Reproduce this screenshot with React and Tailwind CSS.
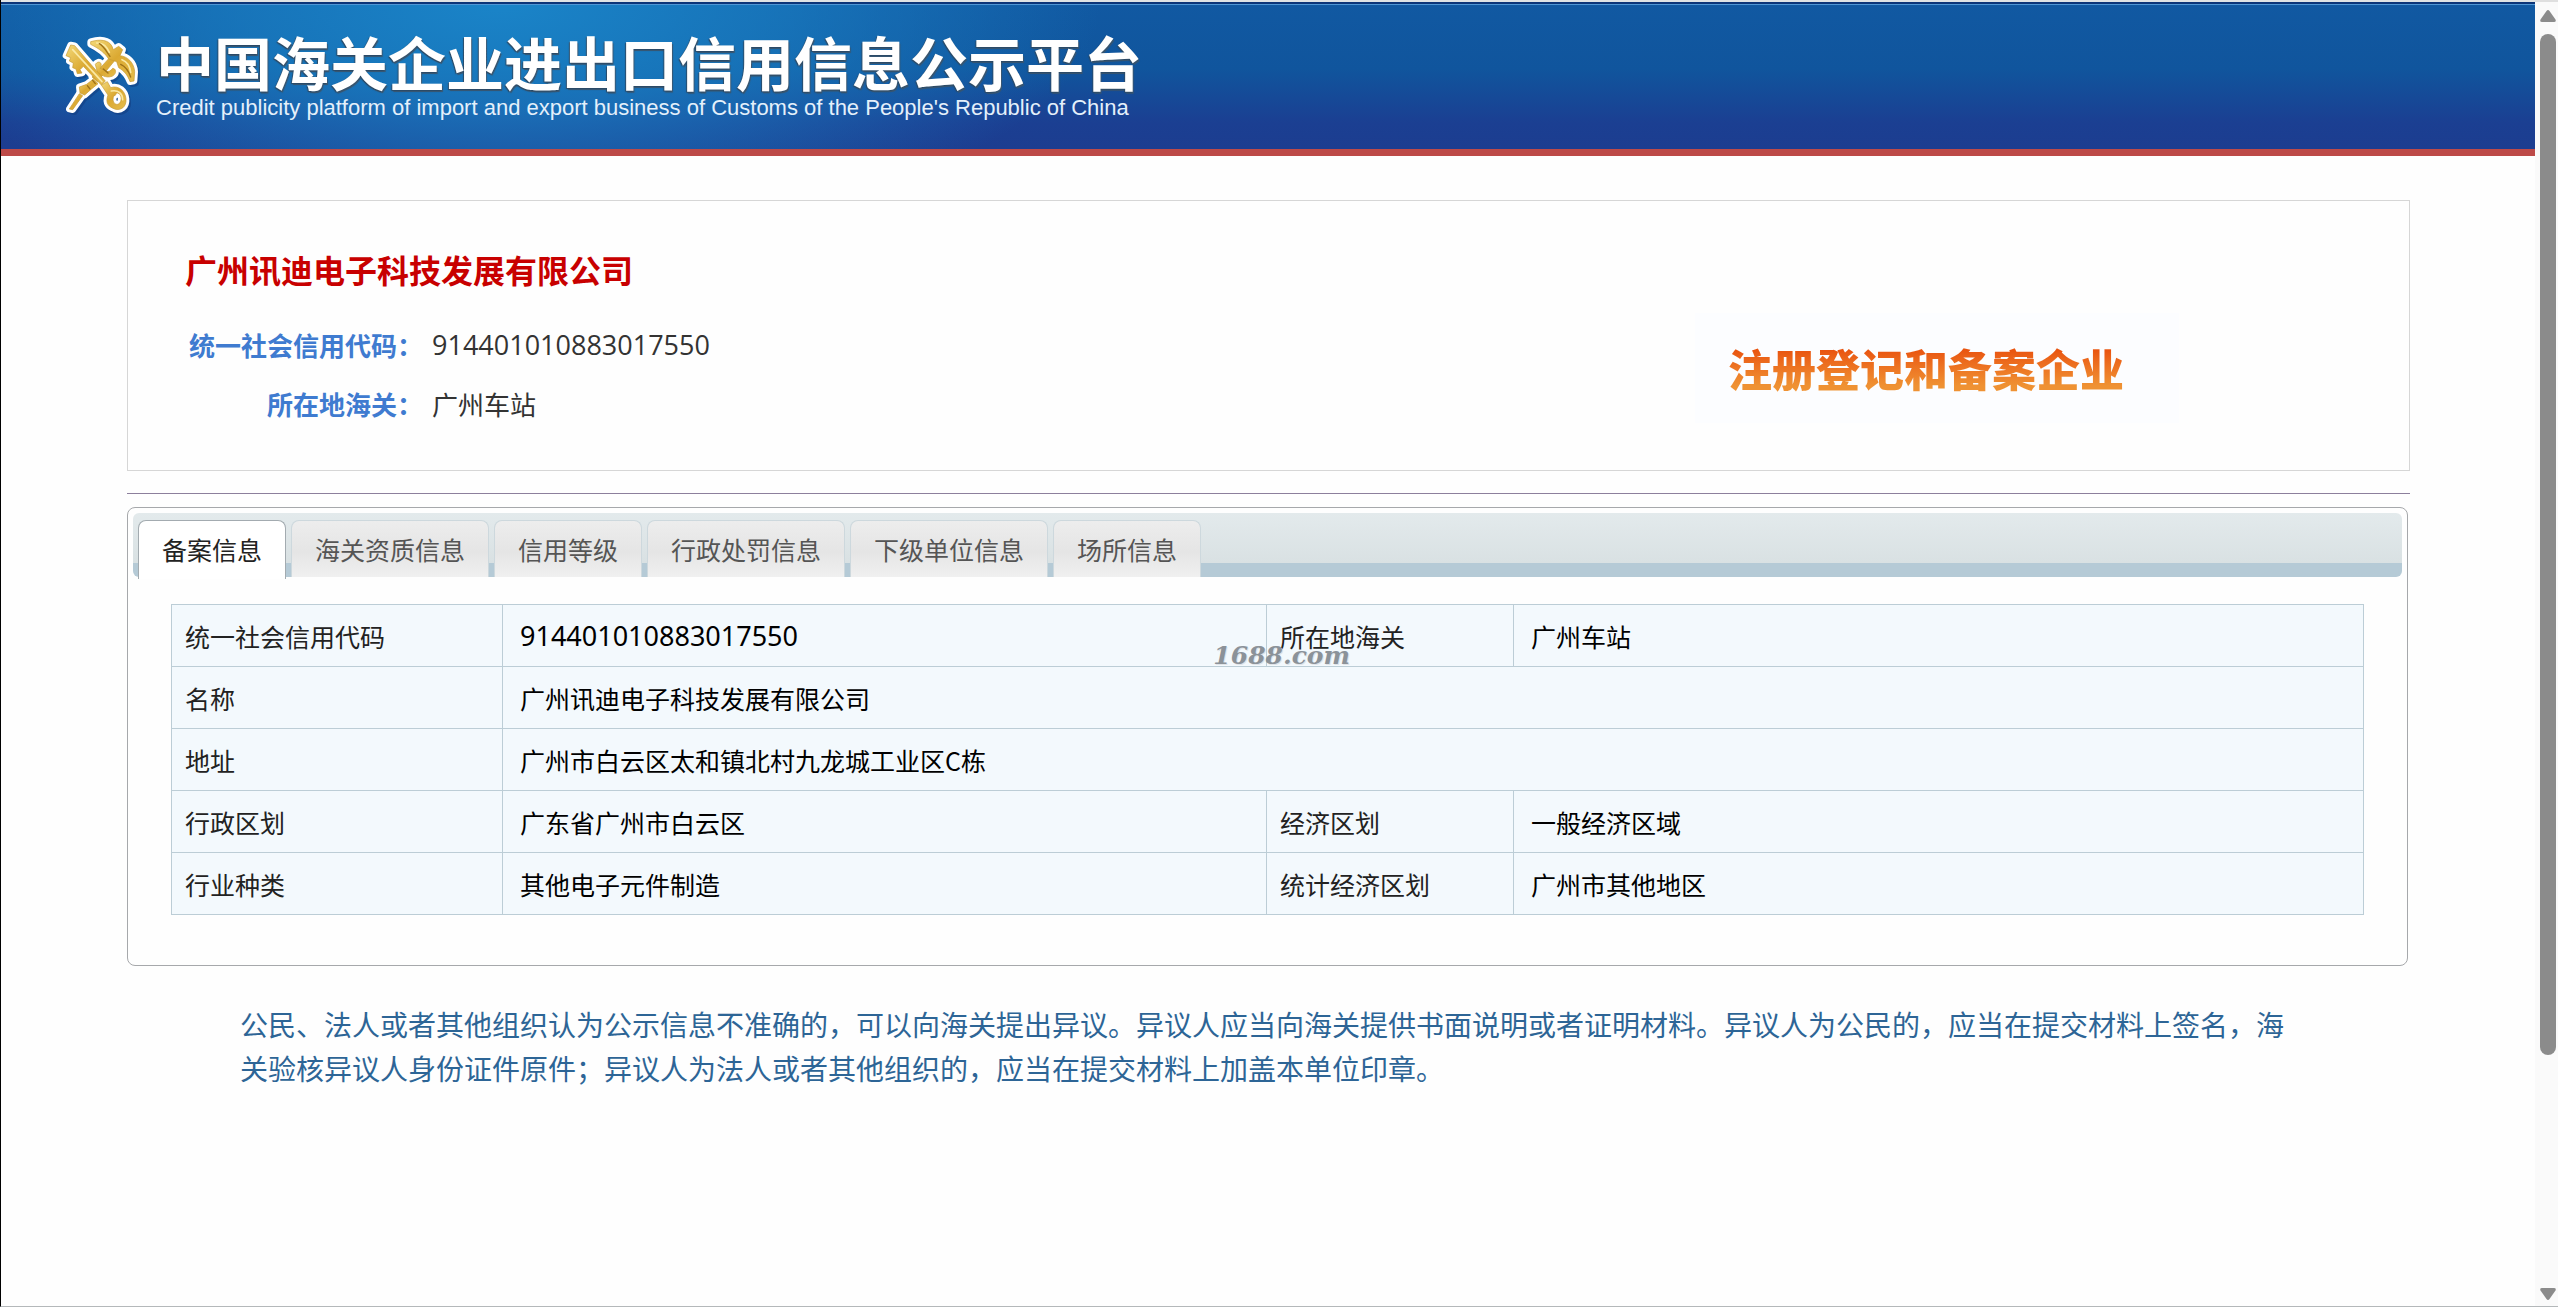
import { useState } from 'react';

const tabs = ['备案信息', '海关资质信息', '信用等级', '行政处罚信息', '下级单位信息', '场所信息'];

const notice =
  '公民、法人或者其他组织认为公示信息不准确的，可以向海关提出异议。异议人应当向海关提供书面说明或者证明材料。异议人为公民的，应当在提交材料上签名，海关验核异议人身份证件原件；异议人为法人或者其他组织的，应当在提交材料上加盖本单位印章。';

function EmblemShapes() {
  return (
    <>
      {/* staff */}
      <path d="M88 262 L118 216 L128 222 L98 264 Z" />
      <path d="M118 196 L140 188 L160 172 L174 186 L152 204 L134 220 L120 214 Z" />
      <path d="M156 166 L216 100 L228 112 L172 180 Z" />
      <path d="M166 128 C178 112 190 128 180 140 C196 146 204 158 218 140 C228 140 232 156 216 164 C196 170 184 160 172 152 Z" />
      {/* wings */}
      <path d="M152 60 C180 52 206 54 216 74 L220 84 L236 74 L248 84 L240 102 C262 104 282 122 284 150 L282 178 L270 180 C262 158 252 148 236 138 L230 120 L206 112 C196 96 180 82 152 68 Z" />
      {/* key */}
      <path d="M92 70 L104 72 L196 178 L184 190 L130 134 L120 144 L126 154 L112 156 L108 142 L98 138 L100 124 L88 118 L92 108 L78 102 Z" />
      <path
        fillRule="evenodd"
        d="M184 190 L202 180 L212 198 C236 190 256 208 258 232 C260 256 242 268 224 262 C208 256 194 246 204 220 Z M222 222 C214 238 224 250 234 248 C248 242 246 216 232 214 C226 214 230 222 222 222 Z"
      />
    </>
  );
}

function Emblem() {
  return (
    <svg viewBox="60 40 240 240" className="h-20 w-20 shrink-0" aria-hidden="true">
      <defs>
        <linearGradient id="gold" x1="0" y1="0" x2="1" y2="1">
          <stop offset="0" stopColor="#f3d877" />
          <stop offset="0.5" stopColor="#dba932" />
          <stop offset="1" stopColor="#e6bd4c" />
        </linearGradient>
      </defs>
      <g fill="#123a7c" stroke="#123a7c" strokeWidth="18" strokeLinejoin="round" opacity="0.5" transform="translate(6 7)">
        <EmblemShapes />
      </g>
      <g fill="#fff" stroke="#fff" strokeWidth="20" strokeLinejoin="round">
        <EmblemShapes />
      </g>
      <g fill="url(#gold)" stroke="#c59a34" strokeWidth="2" strokeLinejoin="round">
        <EmblemShapes />
      </g>
      <g fill="none" stroke="#fae9a4" strokeWidth="5" strokeLinecap="round">
        <path d="M98 84 L186 180" />
        <path d="M170 64 C192 64 200 76 208 92" />
        <path d="M246 114 C262 120 270 134 272 152" />
        <path d="M214 208 C236 204 248 216 248 234" />
      </g>
      <g fill="none" stroke="#9c7018" strokeWidth="4" strokeLinecap="round">
        <path d="M178 66 C192 74 198 88 210 104" />
        <path d="M242 128 C256 134 266 148 272 166" />
        <path d="M142 192 L150 202 M158 176 L166 186" />
        <path d="M190 142 L204 154" />
      </g>
    </svg>
  );
}

function Header() {
  return (
    <header className="border-t-2 border-[#dfe3e4]">
      <div className="border-t-2 border-b-[7px] border-t-[#0c3579] border-b-[#bd4a48] bg-[radial-gradient(ellipse_600px_240px_at_500px_0px,#1a84c8_0%,#1a80c4b0_45%,#1a80c400_100%),linear-gradient(to_bottom,#1159a2_0%,#10559d_45%,#1b3f92_82%,#1c3d90_100%)]">
        <div className="flex h-[145px] items-center border-t border-[#4f96d4] pb-1 pl-[59px]">
          <Emblem />
          <div className="ml-4 whitespace-nowrap text-white">
            <h1 className="text-[58px] leading-[62px] font-bold [text-shadow:-1px_1px_1px_#2b4a66,1px_2px_1px_#3b566e]">
              中国海关企业进出口信用信息公示平台
            </h1>
            <p className="mt-1 font-['Liberation_Sans'] text-[22px] leading-6 text-[#e4f0fb]">
              Credit publicity platform of import and export business of Customs of the People's Republic of China
            </p>
          </div>
        </div>
      </div>
    </header>
  );
}

function CompanyCard() {
  return (
    <section className="flex items-start border border-[#d6d6d6] pt-11 pb-[37px] pl-[57px]">
      <div className="flex-1">
        <h2 className="text-[32px] leading-[48px] font-bold text-[#c80000]">广州讯迪电子科技发展有限公司</h2>
        <dl className="mt-[22px] grid grid-cols-[238px_1fr] gap-x-[9px] text-[26px] leading-[59px] text-[#333]">
          <dt className="text-right font-bold text-[#3f7bd0]">统一社会信用代码：</dt>
          <dd className="font-['Open_Sans'] text-[27px]">914401010883017550</dd>
          <dt className="text-right font-bold text-[#3f7bd0]">所在地海关：</dt>
          <dd>广州车站</dd>
        </dl>
      </div>
      <div className="mt-[68px] mr-[230px] flex h-[110px] w-[484px] items-center bg-[#fcfdff] pl-[33px]">
        <strong className="bg-linear-to-b from-[#e9540f] from-20% to-[#ef9233] to-80% bg-clip-text text-[44px] leading-[60px] font-black text-transparent">
          注册登记和备案企业
        </strong>
      </div>
    </section>
  );
}

function TabBar({ active, onChange }) {
  return (
    <div
      role="tablist"
      className="flex h-16 gap-[5px] rounded-md bg-linear-to-b from-[#e3eaec] from-0% via-[#d9e1e3] via-78% to-[#b5cad6] to-78% pt-[7px] pl-[5px]"
    >
      {tabs.map((tab, i) => (
        <button
          key={tab}
          type="button"
          role="tab"
          aria-selected={i === active}
          onClick={() => onChange(i)}
          className={`rounded-t-lg border border-b-0 px-[23px] text-[25px] leading-[54px] whitespace-nowrap ${
            i === active
              ? 'h-[59px] border-[#a3abb0] bg-white pb-[3px] text-[#222]'
              : 'h-[57px] border-[#cdd8dd] bg-linear-to-b from-[#ededed] from-0% via-[#e5e5e5] via-55% to-[#f0f0f0] pb-px text-[#555]'
          }`}
        >
          {tab}
        </button>
      ))}
    </div>
  );
}

function Label({ children }) {
  return <th className="border border-[#bccdd6] px-[13px] text-left font-normal text-[#222]">{children}</th>;
}

function Value({ children, span }) {
  return (
    <td colSpan={span} className="border border-[#bccdd6] px-[17px] text-black">
      {children}
    </td>
  );
}

function RecordTable() {
  return (
    <div className="relative">
      <table className="w-full table-fixed border-collapse bg-[#f3f9fd] text-[25px] leading-9">
        <colgroup>
          <col className="w-[331px]" />
          <col />
          <col className="w-[247px]" />
          <col className="w-[850px]" />
        </colgroup>
        <tbody>
          <tr className="h-[62px]">
            <Label>统一社会信用代码</Label>
            <Value>
              <span className="font-['Noto_Sans'] text-[27px]">914401010883017550</span>
            </Value>
            <Label>所在地海关</Label>
            <Value>广州车站</Value>
          </tr>
          <tr className="h-[62px]">
            <Label>名称</Label>
            <Value span={3}>广州讯迪电子科技发展有限公司</Value>
          </tr>
          <tr className="h-[62px]">
            <Label>地址</Label>
            <Value span={3}>广州市白云区太和镇北村九龙城工业区C栋</Value>
          </tr>
          <tr className="h-[62px]">
            <Label>行政区划</Label>
            <Value>广东省广州市白云区</Value>
            <Label>经济区划</Label>
            <Value>一般经济区域</Value>
          </tr>
          <tr className="h-[62px]">
            <Label>行业种类</Label>
            <Value>其他电子元件制造</Value>
            <Label>统计经济区划</Label>
            <Value>广州市其他地区</Value>
          </tr>
        </tbody>
      </table>
      {/* watermark */}
      <span className="pointer-events-none absolute top-9 right-[1014px] font-['DejaVu_Serif'] text-[25px] leading-8 font-bold text-[#8b9299] italic [text-shadow:1px_1px_0_#dfe4e8]">
        1688.com
      </span>
    </div>
  );
}

function Scrollbar() {
  return (
    <div className="flex w-[23px] shrink-0 flex-col border-t-2 border-[#dfdfdf] bg-[#fafafa] pr-0.5 pl-[5px]" aria-hidden="true">
      <svg viewBox="0 0 16 12" className="mt-2 h-3 w-4" fill="#8b8b8b">
        <path d="M6.5 1 Q8 -0.8 9.5 1 L15.5 9.5 Q16.5 12 14 12 L2 12 Q-0.5 12 0.5 9.5 Z" />
      </svg>
      <div className="mt-3 mb-[233px] flex-1 rounded-full bg-[#8b8b8b]" />
      <svg viewBox="0 0 16 12" className="mb-1.5 h-3 w-4" fill="#8b8b8b">
        <path d="M6.5 11 Q8 12.8 9.5 11 L15.5 2.5 Q16.5 0 14 0 L2 0 Q-0.5 0 0.5 2.5 Z" />
      </svg>
    </div>
  );
}

export default function App() {
  const [active, setActive] = useState(0);

  return (
    <div className="flex min-h-screen border-b border-l border-b-[#b4b8ba] border-l-black bg-[#fefefe] font-['Noto_Sans_CJK_SC',sans-serif]">
      <div className="min-w-0 flex-1">
        <Header />
        <main className="pt-11 pr-[125px] pl-[126px]">
          <CompanyCard />
          <hr className="mt-[22px] border-[#8c7f9c]" />
          <section className="mt-[13px] mr-0.5 rounded-lg border border-[#a6a8ab] px-[5px] pt-[5px] pb-[50px]">
            <TabBar active={active} onChange={setActive} />
            <div className="pt-[27px] pr-[38px] pl-[38px]">
              <RecordTable />
            </div>
          </section>
          <p className="px-[113px] pt-9 text-[28px] leading-[44px] text-[#2d6596]">{notice}</p>
        </main>
      </div>
      <Scrollbar />
    </div>
  );
}
